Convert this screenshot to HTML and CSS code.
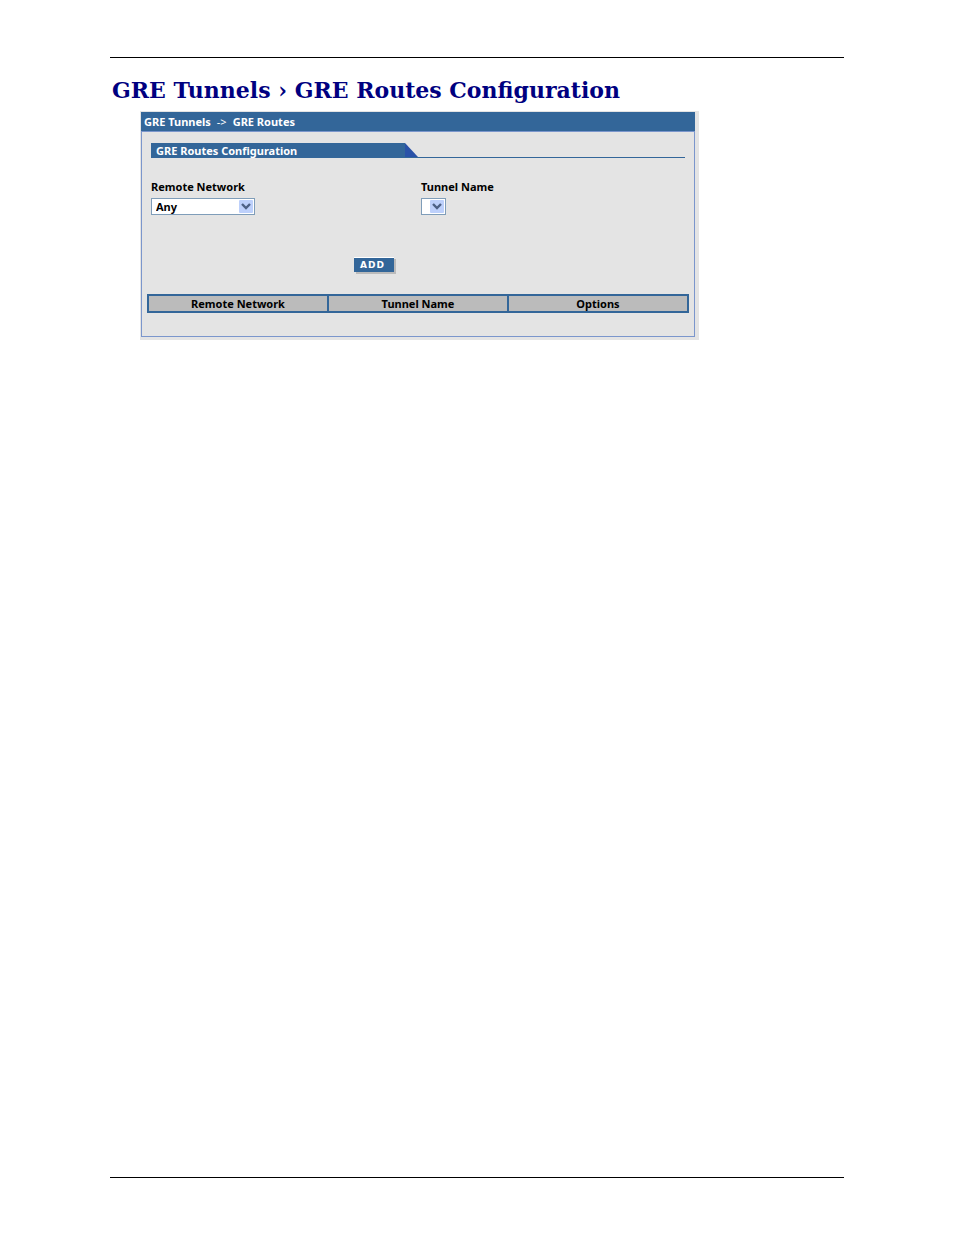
FILE: index.html
```html
<!DOCTYPE html>
<html lang="en">
<head>
<meta charset="utf-8">
<title>GRE Routes Configuration</title>
<link rel="stylesheet" href="styles.css">
</head>
<body>
<div class="page">
  <main class="content">
    <h1 class="title">GRE Tunnels › GRE Routes Configuration</h1>
    <section class="frame">
      <div class="crumbs"><span>GRE Tunnels</span><span class="arrow">-&gt;</span><span>GRE Routes</span></div>
      <form class="panel">
        <div class="tabbar">
          <h2 class="tab">GRE Routes Configuration</h2>
          <svg class="slope" viewBox="0 0 13 14" aria-hidden="true"><path d="M0 0L13 14H0Z" fill="#2a52a8"/></svg>
        </div>
        <div class="fields">
          <div class="field">
            <label for="network">Remote Network</label>
            <div class="picker">
              <select id="network" class="wide"><option>Any</option></select>
              <svg class="chevron" viewBox="0 0 14 13" aria-hidden="true"><rect width="14" height="13" rx="1" fill="#bdd0fb"/><path d="M3 4L7 8L11 4" fill="none" stroke="#4d6185" stroke-width="2.4"/></svg>
            </div>
          </div>
          <div class="field">
            <label for="tunnel">Tunnel Name</label>
            <div class="picker">
              <select id="tunnel" class="narrow"></select>
              <svg class="chevron" viewBox="0 0 14 13" aria-hidden="true"><rect width="14" height="13" rx="1" fill="#bdd0fb"/><path d="M3 4L7 8L11 4" fill="none" stroke="#4d6185" stroke-width="2.4"/></svg>
            </div>
          </div>
        </div>
        <button type="button" class="add">ADD</button>
        <table class="routes">
          <thead><tr><th scope="col">Remote Network</th><th scope="col">Tunnel Name</th><th scope="col">Options</th></tr></thead>
        </table>
      </form>
    </section>
  </main>
</div>
</body>
</html>
```
FILE: styles.css
```css
* { box-sizing: border-box; }
body {
  margin: 0;
  background: #fff;
  color: #000;
  font: bold 11px/14px "Noto Sans", Verdana, sans-serif;
}
.page {
  display: flex;
  min-height: 100vh;
  padding: 57px 110px;
}
.content {
  flex: 1;
  border-top: 1px solid #000;
  border-bottom: 1px solid #000;
}
.title {
  margin: 19px 0 8px 2px;
  color: #000080;
  font: bold 22px/26px "DejaVu Serif", serif;
  white-space: nowrap;
}
.frame {
  max-width: 559px;
  margin-left: 30px;
  padding: 1px 4px 3px 1px;
  background: #e4e4e4;
}
.crumbs {
  display: flex;
  gap: 6px;
  padding: 3px 3px 2px;
  background: #336699;
  color: #fff;
}
.arrow { font-weight: normal; }
.panel {
  padding: 11px 5px 23px;
  border: 1px solid #7b96cc;
}
.tabbar {
  display: flex;
  margin: 0 4px;
  border-bottom: 1px solid #336699;
}
.tab {
  width: 254px;
  margin: 0;
  padding: 2px 0 0 5px;
  background: #336699;
  color: #fff;
  font: inherit;
  line-height: 12px;
}
.slope { width: 13px; height: 14px; }
.fields {
  display: grid;
  grid-template-columns: 1fr 1fr;
  column-gap: 2px;
  margin: 22px 0 42px 4px;
}
.field { display: grid; gap: 4px; justify-items: start; }
.picker { position: relative; display: flex; }
select {
  appearance: none;
  height: 17px;
  padding: 0 4px;
  border: 1px solid #7f9db9;
  border-radius: 0;
  background: #fff;
  color: #000;
  font: inherit;
}
.wide { width: 104px; }
.narrow { width: 25px; }
.chevron {
  position: absolute;
  top: 2px;
  right: 2px;
  width: 14px;
  height: 13px;
  pointer-events: none;
}
.add {
  display: block;
  width: 40px;
  height: 15px;
  margin: 0 auto 22px 207px;
  padding: 0 3px 0 0;
  border: 0;
  border-top: 1px solid #fff;
  background: #336699;
  box-shadow: 2px 2px #bbb;
  color: #fff;
  font: bold 9px/12px "DejaVu Sans", Verdana, sans-serif;
  letter-spacing: 1px;
}
.routes {
  width: 100%;
  table-layout: fixed;
  border-collapse: collapse;
}
.routes th {
  height: 17px;
  padding: 0;
  border: 2px solid #336699;
  background: #bbb;
}
```
